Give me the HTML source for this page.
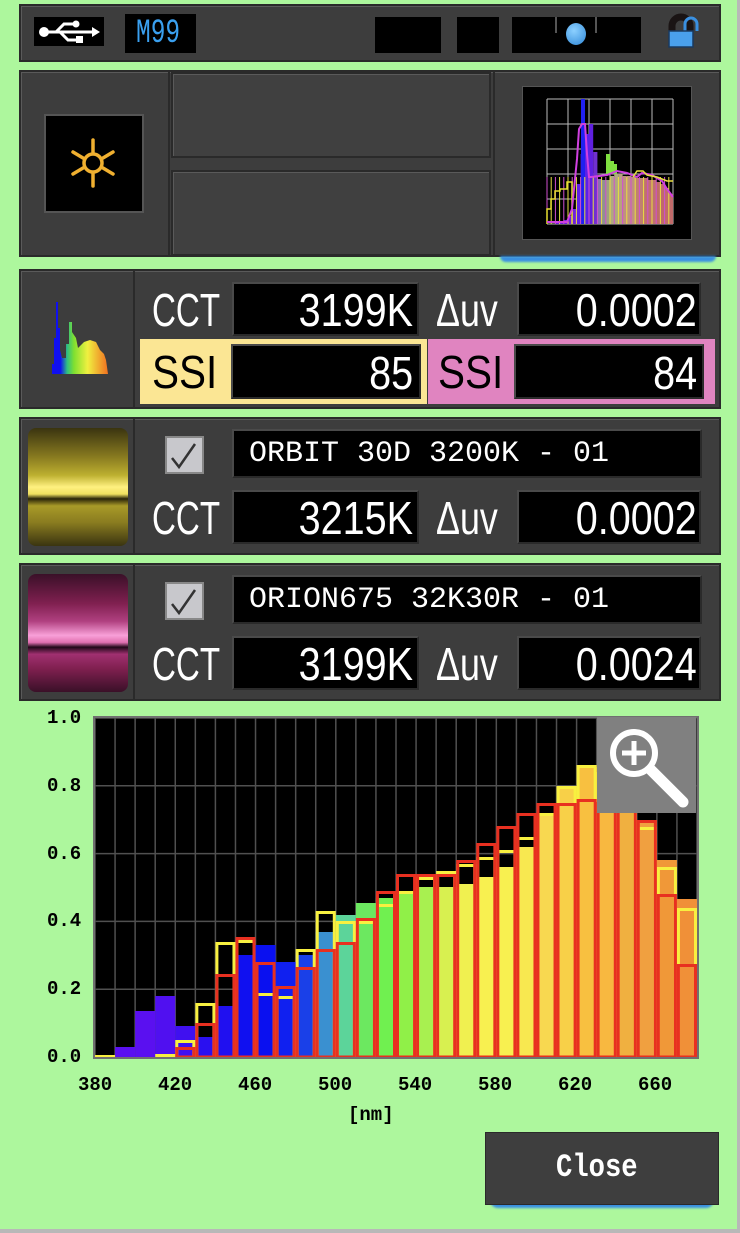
<!DOCTYPE html>
<html><head><meta charset="utf-8">
<style>
*{margin:0;padding:0;box-sizing:border-box}
body{width:740px;height:1233px;background:#adf79d;position:relative;overflow:hidden;font-family:"Liberation Sans",sans-serif}
.a{position:absolute}
.panel{background:#3d3d3d;border:2px solid #2a2a2a;box-shadow:inset 1px 1px 0 #5a5a5a}
.blk{background:#000;border:2px solid #4a4a4a;border-right-color:#2a2a2a;border-bottom-color:#2a2a2a}
.t{position:absolute;color:#fff;white-space:nowrap;transform-origin:0 0;line-height:1}
.big{font-size:46px;transform:scaleX(0.72)}
.ssi{font-size:46px;transform:scaleX(0.88)}
.duv{font-size:46px;transform:scaleX(0.78)}
.num{font-size:46px;transform:scaleX(0.86);transform-origin:100% 0}
.nm{font-family:"Liberation Mono",monospace;font-size:30px;transform:scaleX(1.0)}
.lab{font-family:"Liberation Mono",monospace;font-weight:bold;font-size:19px;color:#000;position:absolute;line-height:1}
</style></head><body>
<div class="a" style="right:0;top:0;width:3px;height:1233px;background:#b8b8b8"></div>
<div class="a" style="left:0;bottom:0;width:740px;height:4px;background:#b8b8b8"></div>

<!-- top bar -->
<div class="a panel" style="left:19px;top:4px;width:702px;height:58px"></div>
<div class="a" style="left:34px;top:17px;width:70px;height:29px;background:#000"></div>
<svg class="a" style="left:36px;top:19px" width="66" height="26" viewBox="0 0 66 26">
<circle cx="8" cy="13" r="5" fill="#fff"/><line x1="8" y1="13" x2="58" y2="13" stroke="#fff" stroke-width="3"/>
<polygon points="56,8 64,13 56,18" fill="#fff"/>
<polyline points="20,13 28,5 38,5" fill="none" stroke="#fff" stroke-width="3"/><circle cx="40" cy="5" r="3.5" fill="#fff"/>
<polyline points="24,13 32,21 42,21" fill="none" stroke="#fff" stroke-width="3"/><rect x="40" y="17" width="7" height="7" fill="#fff"/>
</svg>
<div class="a" style="left:125px;top:14px;width:71px;height:39px;background:#000"></div>
<div class="t" style="left:136px;top:17px;color:#3aa0f0;font-family:'Liberation Mono',monospace;font-size:34px;transform:scaleX(0.72)">M99</div>
<div class="a" style="left:375px;top:17px;width:66px;height:36px;background:#000"></div>
<div class="a" style="left:457px;top:17px;width:42px;height:36px;background:#000"></div>
<div class="a" style="left:512px;top:17px;width:129px;height:36px;background:#000"></div>
<div class="a" style="left:555px;top:17px;width:2px;height:16px;background:#555"></div>
<div class="a" style="left:595px;top:17px;width:2px;height:16px;background:#555"></div>
<div class="a" style="left:566px;top:23px;width:20px;height:22px;border-radius:50%;background:radial-gradient(circle at 40% 35%,#8cd0ff,#2f88d8)"></div>
<svg class="a" style="left:660px;top:12px" width="44" height="40" viewBox="0 0 44 40">
<path d="M12 20 V14 a9 9 0 0 1 18 0 V20" fill="none" stroke="#1a1414" stroke-width="7"/>
<path d="M25 20 V12 a6 6 0 0 1 12 0 V19" fill="none" stroke="#3a90e0" stroke-width="3"/>
<rect x="9" y="19" width="24" height="16" fill="#4aa0ec" stroke="#1a3a60" stroke-width="1.5"/>
</svg>

<!-- panel 2 -->
<div class="a panel" style="left:19px;top:70px;width:702px;height:187px"></div>
<div class="a" style="left:168px;top:70px;width:2px;height:187px;background:#2a2a2a"></div>
<div class="a" style="left:493px;top:70px;width:2px;height:187px;background:#2a2a2a"></div>
<div class="a panel" style="left:171px;top:72px;width:320px;height:86px;background:#404040"></div>
<div class="a panel" style="left:171px;top:170px;width:320px;height:86px;background:#404040"></div>
<div class="a" style="left:44px;top:114px;width:100px;height:99px;background:#000;border:2px solid #555"></div>
<svg class="a" style="left:70px;top:137px" width="46" height="52" viewBox="0 0 46 52">
<g stroke="#f0b030" stroke-width="3.5" stroke-linecap="round" fill="none">
<circle cx="23" cy="26" r="9"/>
<line x1="23" y1="3" x2="23" y2="15"/><line x1="23" y1="37" x2="23" y2="49"/>
<line x1="3" y1="15" x2="13" y2="21"/><line x1="33" y1="31" x2="43" y2="37"/>
<line x1="3" y1="37" x2="13" y2="31"/><line x1="33" y1="21" x2="43" y2="15"/>
</g></svg>
<div class="a" style="left:522px;top:86px;width:170px;height:154px;background:#000;border:1px solid #555"></div>
<svg id="mini" class="a" style="left:546px;top:98px" width="128" height="128" viewBox="-1 -1 128 128"></svg>
<div class="a" style="left:500px;top:256px;width:216px;height:6px;border-radius:0 0 8px 8px;background:#3a90e0;filter:blur(1px)"></div>

<!-- panel 3 -->
<div class="a panel" style="left:19px;top:269px;width:702px;height:140px"></div>
<div class="a" style="left:133px;top:269px;width:2px;height:140px;background:#2a2a2a"></div>
<svg class="a" style="left:36px;top:298px" width="82" height="80">
<defs><linearGradient id="sp" x1="0" x2="1"><stop offset="0" stop-color="#1010f0"/><stop offset="0.3" stop-color="#1010f0"/><stop offset="0.4" stop-color="#30c080"/><stop offset="0.5" stop-color="#80e030"/><stop offset="0.7" stop-color="#f0f040"/><stop offset="1" stop-color="#f07020"/></linearGradient></defs>
<polygon fill="url(#sp)" points="4,76 16,76 16,66 18,66 18,40 20,40 20,4 22,4 22,30 24,30 24,52 26,60 30,60 30,46 33,46 33,24 36,24 36,34 40,40 42,50 48,44 54,42 60,44 64,52 68,56 70,62 72,76 4,76"/>
</svg>
<div class="t big" style="left:152px;top:287px">CCT</div>
<div class="a blk" style="left:232px;top:282px;width:187px;height:54px"></div>
<div class="t num" style="right:327px;top:287px">3199K</div>
<div class="t duv" style="left:436px;top:287px">Δuv</div>
<div class="a blk" style="left:517px;top:282px;width:184px;height:54px"></div>
<div class="t num" style="right:43px;top:287px">0.0002</div>
<div class="a" style="left:140px;top:339px;width:287px;height:65px;background:#fbe694"></div>
<div class="a" style="left:428px;top:339px;width:287px;height:65px;background:#e084c0"></div>
<div class="t ssi" style="left:152px;top:349px;color:#000">SSI</div>
<div class="t ssi" style="left:438px;top:349px;color:#000">SSI</div>
<div class="a blk" style="left:231px;top:344px;width:190px;height:55px"></div>
<div class="a blk" style="left:514px;top:344px;width:190px;height:55px"></div>
<div class="t num" style="right:327px;top:350px">85</div>
<div class="t num" style="right:43px;top:350px">84</div>

<!-- panel 4/5 -->
<div class="a panel" style="left:19px;top:417px;width:702px;height:138px"></div>
<div class="a panel" style="left:19px;top:563px;width:702px;height:138px"></div>
<div class="a" style="left:133px;top:417px;width:2px;height:138px;background:#2a2a2a"></div>
<div class="a" style="left:133px;top:563px;width:2px;height:138px;background:#2a2a2a"></div>
<div class="a" style="left:28px;top:428px;width:100px;height:118px;border-radius:8px;background:linear-gradient(#3a3410,#8a7c20 25%,#bdb030 40%,#fff080 50%,#f0e060 56%,#2a2408 60%,#a89a28 66%,#8a7c20 80%,#3a3410)"></div>
<div class="a" style="left:28px;top:574px;width:100px;height:118px;border-radius:8px;background:linear-gradient(#3a1028,#802050 25%,#b04080 40%,#f8a0d8 52%,#e070b0 58%,#200818 62%,#a03070 68%,#802050 80%,#3a1028)"></div>

<div class="a" style="left:165px;top:436px;width:39px;height:38px;background:#c8c8cc;border:2px solid #888"></div>
<div class="a" style="left:165px;top:582px;width:39px;height:38px;background:#c8c8cc;border:2px solid #888"></div>
<svg class="a" style="left:167px;top:440px" width="34" height="32"><polyline points="5,18 12,27 28,4" fill="none" stroke="#333" stroke-width="2.5"/></svg>
<svg class="a" style="left:167px;top:586px" width="34" height="32"><polyline points="5,18 12,27 28,4" fill="none" stroke="#333" stroke-width="2.5"/></svg>

<div class="a blk" style="left:232px;top:429px;width:470px;height:49px"></div>
<div class="t nm" style="left:249px;top:439px">ORBIT 30D 3200K - 01</div>
<div class="t big" style="left:152px;top:495px">CCT</div>
<div class="a blk" style="left:232px;top:490px;width:187px;height:54px"></div>
<div class="t num" style="right:327px;top:495px">3215K</div>
<div class="t duv" style="left:436px;top:495px">Δuv</div>
<div class="a blk" style="left:517px;top:490px;width:184px;height:54px"></div>
<div class="t num" style="right:43px;top:495px">0.0002</div>

<div class="a blk" style="left:232px;top:575px;width:470px;height:49px"></div>
<div class="t nm" style="left:249px;top:585px">ORION675 32K30R - 01</div>
<div class="t big" style="left:152px;top:641px">CCT</div>
<div class="a blk" style="left:232px;top:636px;width:187px;height:54px"></div>
<div class="t num" style="right:327px;top:641px">3199K</div>
<div class="t duv" style="left:436px;top:641px">Δuv</div>
<div class="a blk" style="left:517px;top:636px;width:184px;height:54px"></div>
<div class="t num" style="right:43px;top:641px">0.0024</div>

<!-- chart -->
<svg id="ch" class="a" style="left:0;top:700px" width="740" height="380" viewBox="0 700 740 380"></svg>
<div class="lab" style="left:47px;top:709px">1.0</div>
<div class="lab" style="left:47px;top:777px">0.8</div>
<div class="lab" style="left:47px;top:845px">0.6</div>
<div class="lab" style="left:47px;top:912px">0.4</div>
<div class="lab" style="left:47px;top:980px">0.2</div>
<div class="lab" style="left:47px;top:1048px">0.0</div>
<div class="lab" style="left:78px;top:1076px">380</div>
<div class="lab" style="left:158px;top:1076px">420</div>
<div class="lab" style="left:238px;top:1076px">460</div>
<div class="lab" style="left:318px;top:1076px">500</div>
<div class="lab" style="left:398px;top:1076px">540</div>
<div class="lab" style="left:478px;top:1076px">580</div>
<div class="lab" style="left:558px;top:1076px">620</div>
<div class="lab" style="left:638px;top:1076px">660</div>
<div class="lab" style="left:348px;top:1106px">[nm]</div>
<div class="a" style="left:597px;top:717px;width:99px;height:96px;background:#808080"></div>
<svg class="a" style="left:597px;top:717px" width="99" height="96">
<circle cx="37" cy="36" r="21" fill="#808080" stroke="#fff" stroke-width="6"/>
<line x1="37" y1="24" x2="37" y2="48" stroke="#fff" stroke-width="5"/><line x1="25" y1="36" x2="49" y2="36" stroke="#fff" stroke-width="5"/>
<line x1="54" y1="53" x2="86" y2="85" stroke="#fff" stroke-width="11" stroke-linecap="round"/>
</svg>

<!-- close -->
<div class="a" style="left:490px;top:1200px;width:224px;height:8px;border-radius:0 0 10px 10px;background:#3a90e0;filter:blur(1px)"></div>
<div class="a" style="left:485px;top:1132px;width:234px;height:73px;background:#3e3e3e;border:1px solid #2a2a2a"></div>
<div class="t" style="left:556px;top:1152px;font-family:'Liberation Mono',monospace;font-weight:bold;font-size:32px;transform:scaleX(0.85)">Close</div>

<script>
var s=document.getElementById('ch'),h='';
var x0=95,W=602/30,B=1057,K=339;
h+='<rect x="95" y="718" width="602" height="339" fill="#000"/>';
for(var i=0;i<=30;i++){var x=x0+i*W;h+='<line x1="'+x+'" y1="718" x2="'+x+'" y2="1057" stroke="#505050" stroke-width="1.5"/>';}
for(var j=0;j<=5;j++){var y=B-j*K/5;h+='<line x1="95" y1="'+y+'" x2="697" y2="'+y+'" stroke="#505050" stroke-width="1.5"/>';}
var F=[0,10,46,61,31,20,51,102,112,95,102,125,142,154,159,166,170,170,173,180,190,210,241,271,292,290,275,237,197,158];
var Y=[2,0,0,3,17,54,115,117,64,61,108,146,136,136,153,166,180,186,193,200,207,220,244,271,292,285,265,230,190,149];
var R=[0,0,0,0,10,34,83,120,95,71,90,108,115,139,166,183,183,183,197,214,231,244,254,254,258,255,248,237,163,93];
var C=['#5a10f0','#5a10f0','#5a10f0','#5010f0','#4010f0','#2a10f0','#2010f0','#1010f0','#0a10f0','#1020f0','#1a40e8','#3a90d0','#5cd49a','#6ce860','#70f050','#90f048','#a8f050','#d8f050','#f0f050','#f8f050','#f8f050','#f8e850','#f8d850','#f8d048','#f8c040','#f8b840','#f0b040','#f0a040','#f09838','#f09038'];
for(var i=0;i<30;i++){var x=x0+i*W;if(F[i])h+='<rect x="'+x+'" y="'+(B-F[i])+'" width="'+W+'" height="'+F[i]+'" fill="'+C[i]+'"/>';}
for(var i=0;i<30;i++){var x=x0+i*W;if(Y[i]>1)h+='<rect x="'+(x+1.5)+'" y="'+(B-Y[i]+1.5)+'" width="'+(W-3)+'" height="'+(Y[i]-1.5)+'" fill="none" stroke="#f8f040" stroke-width="3"/>';}
for(var i=0;i<30;i++){var x=x0+i*W;if(R[i])h+='<rect x="'+(x+1.5)+'" y="'+(B-R[i]+1.5)+'" width="'+(W-3)+'" height="'+(R[i]-1.5)+'" fill="none" stroke="#e83020" stroke-width="3"/>';}
h+='<rect x="94" y="717" width="604" height="341" fill="none" stroke="#707070" stroke-width="2"/>';
s.innerHTML=h;

/* mini chart 126x125 */
var m=document.getElementById('mini'),g='';
for(var i=0;i<=6;i++){g+='<line x1="'+(i*21)+'" y1="0" x2="'+(i*21)+'" y2="125" stroke="#bbb" stroke-width="1"/>';}
for(var j=0;j<=5;j++){g+='<line x1="0" y1="'+(j*25)+'" x2="126" y2="'+(j*25)+'" stroke="#bbb" stroke-width="1"/>';}
var n=30,bw=126/n;
var mf=[0,0,2,3,4,8,15,40,70,90,100,72,45,44,44,48,50,50,48,48,47,46,46,46,44,44,42,40,36,30];
var mc=['#7020e0','#7020e0','#7020e0','#7020e0','#7020e0','#7020e0','#7020e0','#6020e8','#5a20e8','#5a20e8','#6020e0','#7030d0','#8a70b0','#909090','#a0a080','#b0a880','#b0a880','#b8a080','#c09080','#c09080','#c09080','#c08070','#c08070','#c07070','#c07070','#c07070','#c06a6a','#c06a6a','#c06a6a','#c06a6a'];
for(var i=0;i<n;i++){var hh=mf[i];if(hh)g+='<rect x="'+(i*bw)+'" y="'+(125-hh)+'" width="'+bw+'" height="'+hh+'" fill="'+mc[i]+'"/>';}
g+='<rect x="34" y="0" width="4" height="125" fill="#2020f0"/>';
g+='<rect x="59" y="55" width="4" height="20" fill="#80e040"/><rect x="63" y="62" width="4" height="13" fill="#80e040"/><rect x="67" y="65" width="3" height="10" fill="#80e040"/>';
for(var i=0;i<n;i++){g+='<line x1="'+(i*bw)+'" y1="78" x2="'+(i*bw)+'" y2="125" stroke="'+(i%2?'#e8e040':'#d050d0')+'" stroke-width="1"/>';}
g+='<polyline points="0,125 0,110 4,110 4,100 8,100 8,92 13,92 13,90 20,90 20,83 25,83 25,125" fill="none" stroke="#e8e030" stroke-width="1.5"/>';
g+='<polyline points="0,123 20,123 25,110 28,80 30,60 32,30 35,25 38,25 40,55 42,78 44,78 60,76 70,72 80,74 90,78 95,74 105,76 115,82 120,90 126,98" fill="none" stroke="#d040e0" stroke-width="2"/>';
g+='<polyline points="86,78 90,72 96,72 100,76 110,78 120,82 126,82" fill="none" stroke="#e8e040" stroke-width="1.5"/>';
m.innerHTML=g;
</script>
</body></html>
